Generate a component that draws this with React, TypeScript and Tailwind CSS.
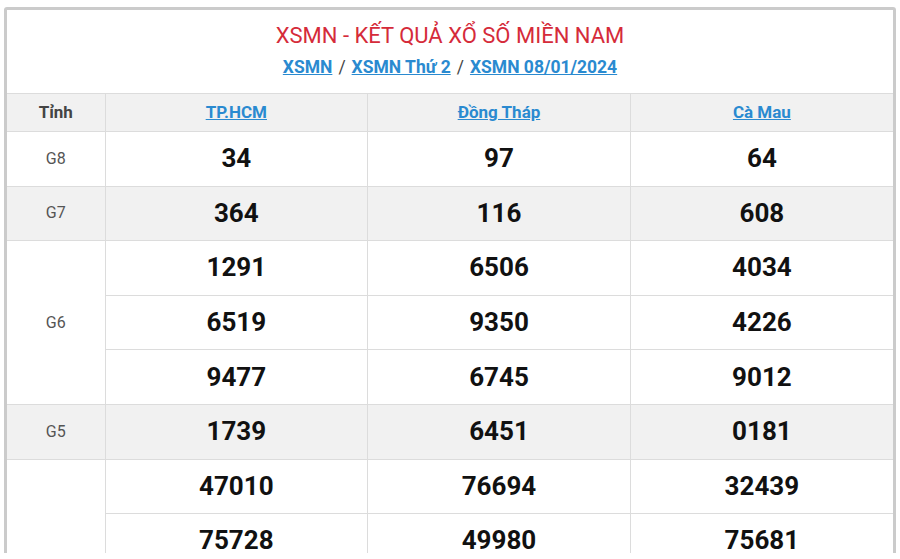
const provinces = ['TP.HCM', 'Đồng Tháp', 'Cà Mau'];

const prizes: { label: string; rows: string[][]; gray?: boolean }[] = [
  { label: 'G8', rows: [['34', '97', '64']] },
  { label: 'G7', rows: [['364', '116', '608']], gray: true },
  {
    label: 'G6',
    rows: [
      ['1291', '6506', '4034'],
      ['6519', '9350', '4226'],
      ['9477', '6745', '9012'],
    ],
  },
  { label: 'G5', rows: [['1739', '6451', '0181']], gray: true },
  {
    label: 'G4',
    rows: [
      ['47010', '76694', '32439'],
      ['75728', '49980', '75681'],
      ['11923', '03371', '84470'],
      ['60512', '28164', '19356'],
      ['93807', '55249', '06728'],
      ['24196', '81035', '47912'],
      ['38654', '12708', '65093'],
    ],
  },
];

export default function App() {
  return (
    <div className="h-[559px] bg-white">
      <div className="h-[553px] overflow-hidden pt-[7px] pl-[4px]" style={{ fontFamily: 'Roboto, "Noto Sans", sans-serif' }}>
        <div className="w-[892px] rounded-[3px] border-[3px] border-[#cbcbcb] bg-white">
          {/* heading */}
          <div className="flex h-[83px] flex-col items-center pt-[11px]">
            <h1 className="text-[22px] leading-[30px] text-[#d52b3a]">XSMN - KẾT QUẢ XỔ SỐ MIỀN NAM</h1>
            <div className="mt-[4px] text-[17.5px] font-bold leading-[24px] text-[#444]">
              <a href="#" className="text-[#2a8ad0] underline">XSMN</a>
              <span className="px-[6px] font-normal">/</span>
              <a href="#" className="text-[#2a8ad0] underline">XSMN Thứ 2</a>
              <span className="px-[6px] font-normal">/</span>
              <a href="#" className="text-[#2a8ad0] underline">XSMN 08/01/2024</a>
            </div>
          </div>

          <table className="w-full table-fixed border-collapse">
            <colgroup>
              <col className="w-[98px]" />
              <col />
              <col />
              <col />
            </colgroup>
            <thead>
              <tr className="h-[38px] bg-[#f1f1f1]">
                <th className="border-t border-r border-[#dcdcdc] text-[17px] font-bold text-[#444]">Tỉnh</th>
                {provinces.map((p, i) => (
                  <th key={p} className={`border-t border-[#dcdcdc] text-[17px] font-bold ${i < 2 ? 'border-r' : ''}`}>
                    <a href="#" className="text-[#2a8ad0] underline">{p}</a>
                  </th>
                ))}
              </tr>
            </thead>
            <tbody>
              {prizes.map((prize) =>
                prize.rows.map((row, ri) => (
                  <tr key={prize.label + ri} className={`h-[54.6px] ${prize.gray ? 'bg-[#f1f1f1]' : 'bg-white'}`}>
                    {ri === 0 && (
                      <td
                        rowSpan={prize.rows.length}
                        className={`border-t border-r border-[#dcdcdc] text-center text-[16px] text-[#555] ${prize.gray ? 'bg-[#f1f1f1]' : 'bg-white'}`}
                      >
                        {prize.label}
                      </td>
                    )}
                    {row.map((n, ci) => (
                      <td
                        key={ci}
                        className={`border-t border-[#dcdcdc] text-center text-[26px] font-bold text-[#111] ${ci < 2 ? 'border-r' : ''}`}
                      >
                        {n}
                      </td>
                    ))}
                  </tr>
                ))
              )}
            </tbody>
          </table>
        </div>
      </div>
    </div>
  );
}
